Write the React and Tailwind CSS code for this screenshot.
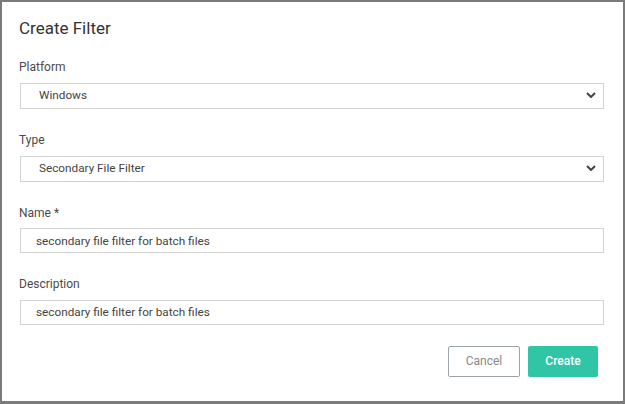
import React from "react";

const Chevron = () => (
  <svg
    width="10"
    height="6"
    viewBox="0 0 10 6"
    className="pointer-events-none absolute right-[8px] top-1/2 -translate-y-1/2"
  >
    <path d="M1 1 L5 5 L9 1" fill="none" stroke="#444" strokeWidth="2" />
  </svg>
);

const Field = ({ label, children }) => (
  <div className="flex flex-col">
    <label className="text-[12px] leading-[16px] text-[#4a4a4a]">{label}</label>
    <div className="ml-[1px] mt-[7px]">{children}</div>
  </div>
);

const SelectBox = ({ value }) => (
  <div className="relative">
    <select
      defaultValue={value}
      className="h-[26px] w-full appearance-none border border-[#d3d3d3] bg-white pl-[18px] text-[11.75px] text-[#444] outline-none"
    >
      <option>{value}</option>
    </select>
    <Chevron />
  </div>
);

const TextBox = ({ value }) => (
  <input
    defaultValue={value}
    className="h-[25px] w-full border border-[#d3d3d3] bg-white pl-[15px] text-[11.75px] text-[#444] outline-none"
  />
);

export default function App() {
  return (
    <div
      className="flex h-[404px] w-[625px] flex-col border-2 border-b-[3px] border-[#7b7b7b] bg-white pl-[17px] pr-[19px] pt-[14px]"
      style={{ fontFamily: "Roboto, 'Liberation Sans', sans-serif" }}
    >
      <h1 className="text-[17px] leading-[24px] text-[#333]">Create Filter</h1>

      <div className="mt-[19px] flex flex-col gap-[23px]">
        <Field label="Platform">
          <SelectBox value="Windows" />
        </Field>
        <Field label="Type">
          <SelectBox value="Secondary File Filter" />
        </Field>
        <Field label="Name *">
          <TextBox value="secondary file filter for batch files" />
        </Field>
        <Field label="Description">
          <TextBox value="secondary file filter for batch files" />
        </Field>
      </div>

      <div className="mt-[21px] flex justify-end gap-[8px] pr-[6px]">
        <button className="h-[31px] w-[72px] rounded-[2px] border border-[#9ca3a9] bg-white text-[12px] text-[#888]">
          Cancel
        </button>
        <button className="h-[31px] w-[70px] rounded-[2px] bg-[#30c5a5] text-[12px] font-medium text-white">
          Create
        </button>
      </div>
    </div>
  );
}
